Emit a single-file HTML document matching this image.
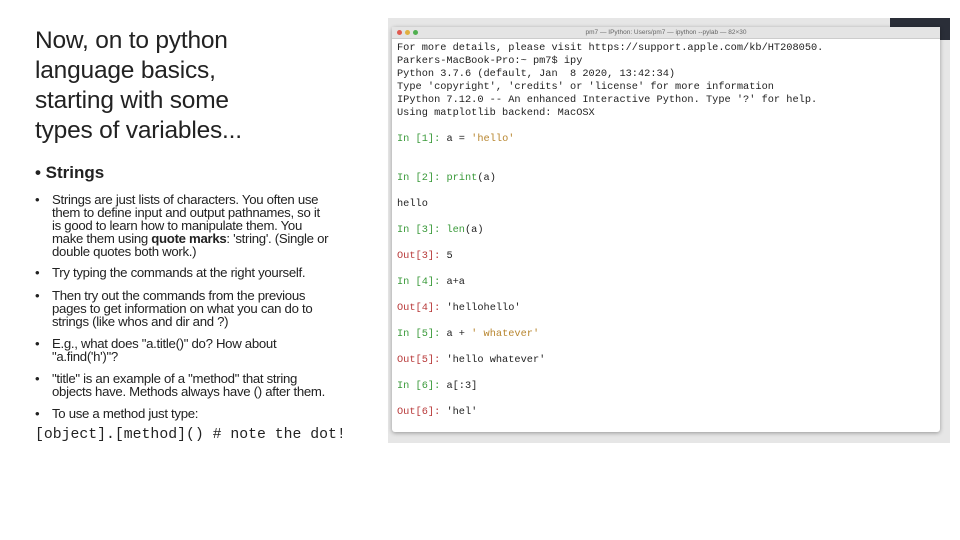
<!DOCTYPE html>
<html><head><meta charset="utf-8"><style>
body{margin:0;width:960px;height:540px;background:#fff;position:relative;overflow:hidden;font-family:"Liberation Sans",sans-serif;color:#111}
.t{position:absolute;left:35px;top:26px;font-size:24.5px;line-height:30px;color:#222;letter-spacing:-0.2px}
.b{position:absolute;font-size:13.2px;line-height:13px;color:#222;letter-spacing:-0.3px;white-space:nowrap}
.b .d{position:absolute;left:-17px}
.m{font-family:"Liberation Mono",monospace}
#bg{position:absolute;left:388px;top:18px;width:562px;height:425px;background:#e6e6e6}
#dark{position:absolute;left:890px;top:18px;width:60px;height:22px;background:#2a2e38}
#term{position:absolute;left:392px;top:27px;width:548px;height:405px;background:#fff;box-shadow:0 1px 4px rgba(0,0,0,.35);border-radius:3px}
#tb{height:11px;background:#e4e4e4;border-bottom:1px solid #ccc;font-size:6.5px;color:#666;text-align:center;line-height:11px;position:relative}
.dot{position:absolute;top:3px;width:5px;height:5px;border-radius:50%}
.l{position:absolute;left:5px;font-family:"Liberation Mono",monospace;font-size:10.3px;white-space:pre;color:#222;margin-top:2px}
.g{color:#3a9a3a}.r{color:#b83a3a}.o{color:#b8862f}
</style></head><body>
<div class="t">Now, on to python<br>language basics,<br>starting with some<br>types of variables...</div>
<div class="b" style="left:35px;top:166px;font-size:17px;font-weight:bold;letter-spacing:0">• Strings</div>
<div class="b" style="left:52px;top:193px"><span class="d">•</span>Strings are just lists of characters. You often use<br>them to define input and output pathnames, so it<br>is good to learn how to manipulate them. You<br>make them using <b>quote marks</b>: 'string'. (Single or<br>double quotes both work.)</div>
<div class="b" style="left:52px;top:266px"><span class="d">•</span>Try typing the commands at the right yourself.</div>
<div class="b" style="left:52px;top:289px"><span class="d">•</span>Then try out the commands from the previous<br>pages to get information on what you can do to<br>strings (like whos and dir and ?)</div>
<div class="b" style="left:52px;top:337px"><span class="d">•</span>E.g., what does "a.title()" do? How about<br>"a.find('h')"?</div>
<div class="b" style="left:52px;top:372px"><span class="d">•</span>"title" is an example of a "method" that string<br>objects have. Methods always have () after them.</div>
<div class="b" style="left:52px;top:407px"><span class="d">•</span>To use a method just type:</div>
<div class="b m" style="left:35px;top:429px;font-size:14.8px;letter-spacing:0">[object].[method]() # note the dot!</div>
<div id="bg"></div><div id="dark"></div>
<div id="term"><div id="tb"><span class="dot" style="left:5px;background:#e05a50"></span><span class="dot" style="left:13px;background:#e0b040"></span><span class="dot" style="left:21px;background:#50b050"></span>pm7 — IPython: Users/pm7 — ipython --pylab — 82×30</div>
<div class="l" style="top:13px">For more details, please visit https://support.apple.com/kb/HT208050.</div>
<div class="l" style="top:26px">Parkers-MacBook-Pro:~ pm7$ ipy</div>
<div class="l" style="top:39px">Python 3.7.6 (default, Jan  8 2020, 13:42:34)</div>
<div class="l" style="top:52px">Type 'copyright', 'credits' or 'license' for more information</div>
<div class="l" style="top:65px">IPython 7.12.0 -- An enhanced Interactive Python. Type '?' for help.</div>
<div class="l" style="top:78px">Using matplotlib backend: MacOSX</div>
<div class="l" style="top:104px"><span class="g">In [1]:</span> a = <span class="o">'hello'</span></div>
<div class="l" style="top:143px"><span class="g">In [2]:</span> <span class="g">print</span>(a)</div>
<div class="l" style="top:169px">hello</div>
<div class="l" style="top:195px"><span class="g">In [3]:</span> <span class="g">len</span>(a)</div>
<div class="l" style="top:221px"><span class="r">Out[3]:</span> 5</div>
<div class="l" style="top:247px"><span class="g">In [4]:</span> a+a</div>
<div class="l" style="top:273px"><span class="r">Out[4]:</span> 'hellohello'</div>
<div class="l" style="top:299px"><span class="g">In [5]:</span> a + <span class="o">' whatever'</span></div>
<div class="l" style="top:325px"><span class="r">Out[5]:</span> 'hello whatever'</div>
<div class="l" style="top:351px"><span class="g">In [6]:</span> a[:3]</div>
<div class="l" style="top:377px"><span class="r">Out[6]:</span> 'hel'</div>
</div>
</body></html>
